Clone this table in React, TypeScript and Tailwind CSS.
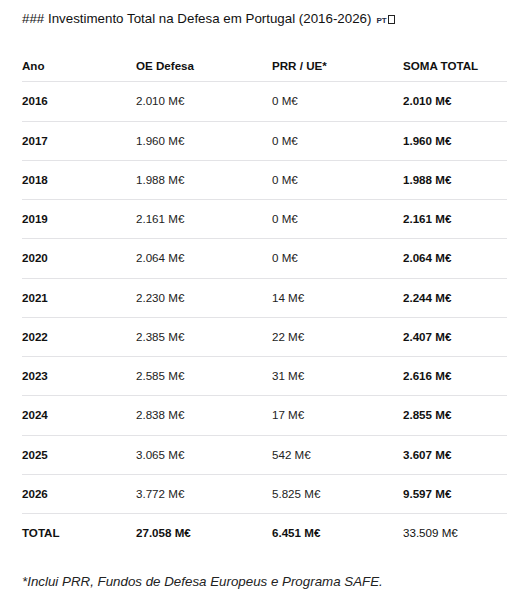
const rows = [
  ['2016', '2.010 M€', '0 M€', '2.010 M€'],
  ['2017', '1.960 M€', '0 M€', '1.960 M€'],
  ['2018', '1.988 M€', '0 M€', '1.988 M€'],
  ['2019', '2.161 M€', '0 M€', '2.161 M€'],
  ['2020', '2.064 M€', '0 M€', '2.064 M€'],
  ['2021', '2.230 M€', '14 M€', '2.244 M€'],
  ['2022', '2.385 M€', '22 M€', '2.407 M€'],
  ['2023', '2.585 M€', '31 M€', '2.616 M€'],
  ['2024', '2.838 M€', '17 M€', '2.855 M€'],
  ['2025', '3.065 M€', '542 M€', '3.607 M€'],
  ['2026', '3.772 M€', '5.825 M€', '9.597 M€'],
];

const cell = 'py-3 leading-[14.27px] text-left align-middle';
const head = 'pt-[17px] pb-[8px] leading-[14.27px] text-left align-middle font-bold';

export default function App() {
  return (
    <div className="min-h-screen bg-white pl-[22px] pt-[10px] text-[#111] [font-family:'Liberation_Sans',Arial,sans-serif]">
      <h3 className="text-[13.33px] leading-[18px] font-normal">
        ### Investimento Total na Defesa em Portugal (2016-2026)
        <span className="ml-[5px] text-[8px] font-bold text-[#1e2a44]">PT</span>
        <span className="ml-[1px] inline-block h-[9px] w-[7px] border border-[#222] align-[-1px]" />
      </h3>

      <table className="mt-[12px] w-[485px] table-fixed border-collapse text-[11.6px]">
        <colgroup>
          <col className="w-[114px]" />
          <col className="w-[136px]" />
          <col className="w-[131px]" />
          <col className="w-[104px]" />
        </colgroup>
        <thead>
          <tr className="border-b border-[#e3e3e6]">
            <th className={head}>Ano</th>
            <th className={head}>OE Defesa</th>
            <th className={head}>PRR / UE*</th>
            <th className={head}>SOMA TOTAL</th>
          </tr>
        </thead>
        <tbody>
          {rows.map(([ano, oe, prr, soma]) => (
            <tr key={ano} className="border-b border-[#e3e3e6]">
              <td className={`${cell} font-bold`}>{ano}</td>
              <td className={`${cell} text-[#222]`}>{oe}</td>
              <td className={`${cell} text-[#222]`}>{prr}</td>
              <td className={`${cell} font-bold`}>{soma}</td>
            </tr>
          ))}
          <tr>
            <td className={`${cell} font-bold`}>TOTAL</td>
            <td className={`${cell} font-bold`}>27.058 M€</td>
            <td className={`${cell} font-bold`}>6.451 M€</td>
            <td className={cell}>33.509 M€</td>
          </tr>
        </tbody>
      </table>

      <p className="mt-[21px] text-[13.33px] leading-[18px] italic text-[#222]">
        *Inclui PRR, Fundos de Defesa Europeus e Programa SAFE.
      </p>
    </div>
  );
}
